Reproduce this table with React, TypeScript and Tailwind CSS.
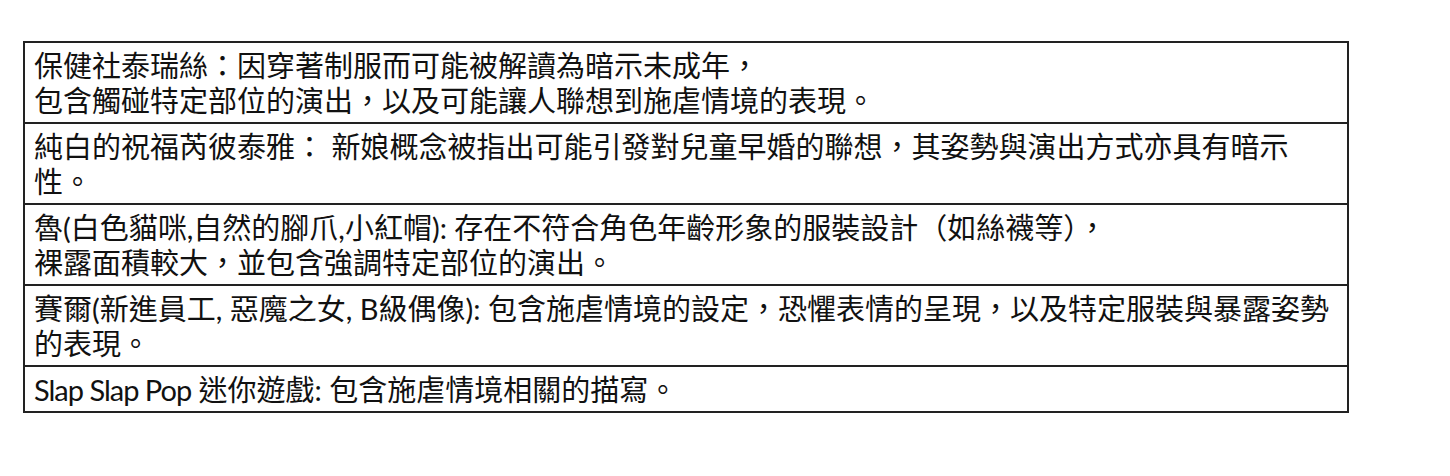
import React from "react";

// Each entry is one table row; every inner array is a forced line.
const rows: React.ReactNode[][] = [
  [
    "保健社泰瑞絲：因穿著制服而可能被解讀為暗示未成年，",
    "包含觸碰特定部位的演出，以及可能讓人聯想到施虐情境的表現。",
  ],
  [
    "純白的祝福芮彼泰雅： 新娘概念被指出可能引發對兒童早婚的聯想，其姿勢與演出方式亦具有暗示",
    "性。",
  ],
  [
    "魯(白色貓咪,自然的腳爪,小紅帽): 存在不符合角色年齡形象的服裝設計（如絲襪等），",
    "裸露面積較大，並包含強調特定部位的演出。",
  ],
  [
    "賽爾(新進員工, 惡魔之女, B級偶像): 包含施虐情境的設定，恐懼表情的呈現，以及特定服裝與暴露姿勢",
    "的表現。",
  ],
  [
    <>
      <span className="tracking-[-1px]">Slap Slap Pop</span> 迷你遊戲: 包含施虐情境相關的描寫。
    </>,
  ],
];

export default function App() {
  return (
    <div className="min-h-[476px] w-[1450px] bg-white pl-[23px] pt-[41px]">
      <div
        className="flex w-[1326px] flex-col border-2 border-[#222] text-[29px] leading-[35px] text-[#111]"
        style={{ fontFamily: 'Lato, "Noto Sans CJK TC", sans-serif' }}
      >
        {rows.map((lines, i) => (
          <div
            key={i}
            className={
              "pl-[9px] pt-[5px] pb-[4px] whitespace-nowrap" +
              (i > 0 ? " border-t-2 border-[#222]" : "")
            }
          >
            {lines.map((line, j) => (
              <div key={j}>{line}</div>
            ))}
          </div>
        ))}
      </div>
    </div>
  );
}
